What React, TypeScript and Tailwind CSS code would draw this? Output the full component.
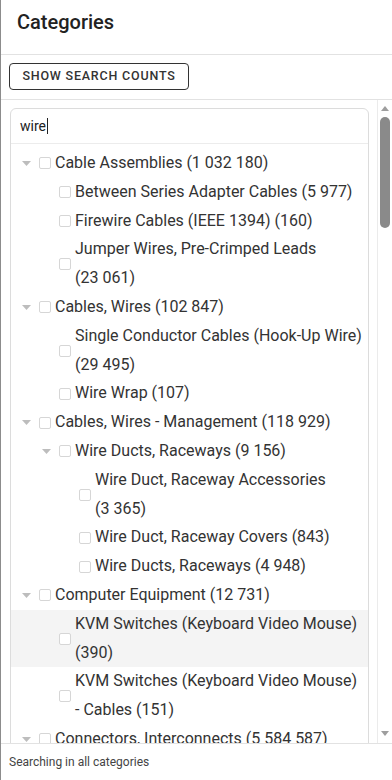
import React from "react";

type Row = { level: number; label: string; caret?: boolean; hl?: boolean };

const rows: Row[] = [
  { level: 0, label: "Cable Assemblies (1\u00a0032\u00a0180)", caret: true },
  { level: 1, label: "Between Series Adapter Cables (5\u00a0977)" },
  { level: 1, label: "Firewire Cables (IEEE 1394) (160)" },
  { level: 1, label: "Jumper Wires, Pre-Crimped Leads (23\u00a0061)" },
  { level: 0, label: "Cables, Wires (102\u00a0847)", caret: true },
  { level: 1, label: "Single Conductor Cables (Hook-Up Wire) (29\u00a0495)" },
  { level: 1, label: "Wire Wrap (107)" },
  { level: 0, label: "Cables, Wires - Management (118\u00a0929)", caret: true },
  { level: 1, label: "Wire Ducts, Raceways (9\u00a0156)", caret: true },
  { level: 2, label: "Wire Duct, Raceway Accessories (3\u00a0365)" },
  { level: 2, label: "Wire Duct, Raceway Covers (843)" },
  { level: 2, label: "Wire Ducts, Raceways (4\u00a0948)" },
  { level: 0, label: "Computer Equipment (12\u00a0731)", caret: true },
  { level: 1, label: "KVM Switches (Keyboard Video Mouse) (390)", hl: true },
  { level: 1, label: "KVM Switches (Keyboard Video Mouse) - Cables (151)" },
  { level: 0, label: "Connectors, Interconnects (5\u00a0584\u00a0587)", caret: true },
  { level: 1, label: "Rectangular Connectors (1\u00a0254\u00a0330)", caret: true },
  { level: 2, label: "Rectangular Connectors - Free Hanging, Panel Mount (72\u00a0114)" },
  { level: 2, label: "Terminals - Wire Pin Connectors (1\u00a0211)" },
];

const padByLevel = ["pl-[10px]", "pl-[30px]", "pl-[50px]", "pl-[70px]"];

function Caret() {
  return (
    <svg width="9" height="5" viewBox="0 0 9 5" className="block">
      <path d="M0 0 L9 0 L4.5 5 Z" fill="#bdbdbd" />
    </svg>
  );
}

function TreeRow({ row }: { row: Row }) {
  return (
    <div
      className={`flex items-center pr-[4px] ${padByLevel[row.level]} ${
        row.hl ? "bg-[#f4f4f4]" : ""
      }`}
    >
      <div className="w-[18px] shrink-0 flex items-center pl-[1px]">
        {row.caret ? <Caret /> : null}
      </div>
      <div className="w-[12px] h-[12px] shrink-0 border border-[#d6d6d6] rounded-[2px] bg-white mr-[4px]" />
      <div className="text-[16px] leading-[1.8] text-[#333333]">{row.label}</div>
    </div>
  );
}

function Scrollbar() {
  return (
    <div className="w-[15px] shrink-0 border-l border-[#ebebeb] bg-white flex flex-col items-center pt-[6px] pb-[7px]">
      <svg width="8" height="5" viewBox="0 0 8 5" className="block shrink-0">
        <path d="M0 5 L8 5 L4 0 Z" fill="#9e9e9e" />
      </svg>
      <div className="mt-[6px] w-[10px] h-[111px] rounded-full bg-[#8a8a8a] shrink-0" />
      <div className="flex-1" />
      <svg width="8" height="5" viewBox="0 0 8 5" className="block shrink-0">
        <path d="M0 0 L8 0 L4 5 Z" fill="#9e9e9e" />
      </svg>
    </div>
  );
}

export default function App() {
  return (
    <div className="h-[780px] w-[392px] flex flex-col bg-white border-l-[1px] border-[#8c8c8c] font-['Roboto',sans-serif] text-[#333333] overflow-hidden">
      <div className="h-[55px] shrink-0 border-b border-[#e2e2e2] flex items-center pl-[16px] pb-[10px]">
        <h1 className="text-[20px] font-medium text-[#222222]">Categories</h1>
      </div>
      <div className="shrink-0 border-b border-[#e2e2e2] pt-[8px] pb-[9px] pl-[8px]">
        <button className="h-[27px] w-[180px] border border-[#333333] rounded-[4px] text-[12.5px] font-medium tracking-[0.8px] text-[#333333] flex items-center justify-center">
          SHOW SEARCH COUNTS
        </button>
      </div>
      <div className="flex-1 min-h-0 flex">
        <div className="flex-1 min-w-0 overflow-hidden pt-[8px] pl-[9px] pr-[8px]">
          <div className="border border-[#dcdcdc] rounded-t-[6px] bg-white">
            <div className="h-[35px] border-b border-[#ececec] flex items-center pl-[9px]">
              <span className="text-[14px] text-[#222222]">wire</span>
              <span className="w-[1px] h-[16px] bg-[#222222] ml-[1px]" />
            </div>
            <div className="pt-[5px] pb-[8px]">
              {rows.map((r, i) => (
                <TreeRow key={i} row={r} />
              ))}
            </div>
          </div>
        </div>
        <Scrollbar />
      </div>
      <div className="h-[37px] shrink-0 border-t border-[#e2e2e2] flex items-center pl-[8px]">
        <span className="text-[12px] text-[#444444]">Searching in all categories</span>
      </div>
    </div>
  );
}
